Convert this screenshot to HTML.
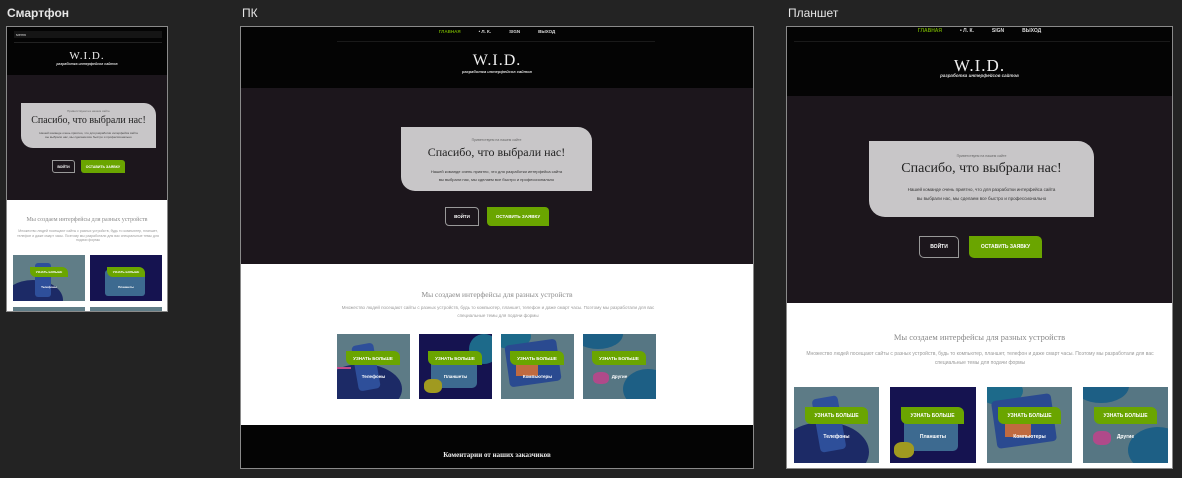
<!DOCTYPE html>
<html><head><meta charset="utf-8"><style>
*{margin:0;padding:0;box-sizing:border-box}
body{width:1182px;height:478px;background:#232323;position:relative;overflow:hidden;font-family:"Liberation Sans",sans-serif}
.a{position:absolute}
.lbl{color:#e6e6e6;font-size:12px}
.frame{position:absolute;border:1px solid #8a8a8a;overflow:hidden;background:#fff}
.hdr{position:absolute;left:0;right:0;top:0;background:#040404}
.hero{position:absolute;left:0;right:0;background:#1c161c}
.nav{position:absolute;left:0;right:0;text-align:center;color:#ddd;font-weight:bold;white-space:nowrap}
.nav span{margin:0 9px}
.nav .g{color:#6aa000}
.logo{position:absolute;left:0;right:0;text-align:center;color:#eee;font-family:"Liberation Serif",serif}
.sub{position:absolute;left:0;right:0;text-align:center;color:#ddd;font-style:italic;font-weight:bold}
.card{position:absolute;background:#c8c6c8;text-align:center;color:#222}
.card .s{color:#666}
.card h1{font-family:"Liberation Serif",serif;font-weight:normal;color:#222}
.btn1{position:absolute;border:1px solid #999;color:#fff;font-weight:bold;display:flex;align-items:center;justify-content:center}
.btn2{position:absolute;background:#6aa500;color:#fff;font-weight:bold;display:flex;align-items:center;justify-content:center}
.t{position:absolute;left:0;right:0;text-align:center;color:#8a8a8a;font-family:"Liberation Serif",serif}
.d{position:absolute;text-align:center;color:#9a9a9a}
.im{position:absolute;overflow:hidden}
.im div{position:absolute}
.gb{background:#6aa500;color:#fff;font-weight:bold;display:flex;align-items:center;justify-content:center;border-radius:0 6px 0 6px}
.cap{color:#fff;font-weight:bold;text-align:center}
</style></head><body>

<!-- Smartphone -->
<div class="a lbl" style="left:7px;top:6px;font-weight:bold;font-size:12px">Смартфон</div>
<div class="frame" style="left:6px;top:26px;width:162px;height:286px">
  <div class="hdr" style="height:48px"></div>
  <div class="a" style="left:7px;top:4px;width:148px;height:7px;background:#151515;color:#ccc;font-size:4px;padding-left:2px;line-height:7px">меню</div>
  <div class="a" style="left:7px;top:15px;width:148px;height:1px;background:#222"></div>
  <div class="logo" style="top:23px;font-size:11px;letter-spacing:1px">W.I.D.</div>
  <div class="sub" style="top:35px;font-size:3.5px">разработка интерфейсов сайтов</div>
  <div class="hero" style="top:48px;height:125px"></div>
  <div class="card" style="left:14px;top:76px;width:135px;height:45px;border-radius:0 12px 0 12px">
    <div class="s" style="font-size:3px;margin-top:6px">Приветствуем на нашем сайте</div>
    <h1 style="font-size:10px;margin-top:2px">Спасибо, что выбрали нас!</h1>
    <div style="font-size:3px;margin-top:5px;line-height:4px;color:#444">Нашей команде очень приятно, что для разработки интерфейса сайта<br>вы выбрали нас, мы сделаем все быстро и профессионально</div>
  </div>
  <div class="btn1" style="left:45px;top:133px;width:23px;height:13px;font-size:3.5px;border-radius:0 3px 0 3px">ВОЙТИ</div>
  <div class="btn2" style="left:74px;top:133px;width:44px;height:13px;font-size:3.5px;border-radius:0 3px 0 3px">ОСТАВИТЬ ЗАЯВКУ</div>
  <div class="t" style="top:190px;font-size:6px">Мы создаем интерфейсы для разных устройств</div>
  <div class="d" style="left:10px;width:142px;top:202px;font-size:3.5px;line-height:4.5px">Множество людей посещают сайты с разных устройств, будь то компьютер, планшет, телефон и даже смарт часы. Поэтому мы разработали для вас специальные темы для подачи формы</div>
  <div class="im" style="left:6px;top:228px;width:72px;height:46px;background:#607d87">
    <div style="left:-10px;top:25px;width:60px;height:40px;background:#1c2a66;border-radius:50%"></div>
    <div style="left:22px;top:8px;width:16px;height:34px;background:#2e4f9a;border-radius:3px"></div>
    <div class="gb" style="left:17px;top:12px;width:38px;height:10px;font-size:3px">УЗНАТЬ БОЛЬШЕ</div>
    <div class="cap" style="left:0;right:0;top:30px;font-size:3px">Телефоны</div>
  </div>
  <div class="im" style="left:83px;top:228px;width:72px;height:46px;background:#151350">
    <div style="left:15px;top:15px;width:40px;height:26px;background:#3d6a90;border-radius:3px"></div>
    <div class="gb" style="left:17px;top:12px;width:38px;height:10px;font-size:3px">УЗНАТЬ БОЛЬШЕ</div>
    <div class="cap" style="left:0;right:0;top:30px;font-size:3px">Планшеты</div>
  </div>
  <div class="im" style="left:6px;top:280px;width:72px;height:10px;background:#607d87"></div>
  <div class="im" style="left:83px;top:280px;width:72px;height:10px;background:#607d87"></div>
</div>

<!-- PC -->
<div class="a lbl" style="left:242px;top:6px">ПК</div>
<div class="frame" style="left:240px;top:26px;width:514px;height:443px">
  <div class="hdr" style="height:61px"></div>
  <div class="nav" style="top:2px;font-size:4.5px;line-height:6px"><span class="g">ГЛАВНАЯ</span><span>• Л. К.</span><span>SIGN</span><span>ВЫХОД</span></div>
  <div class="a" style="left:96px;top:14px;width:318px;height:1px;background:#1a1a1a"></div>
  <div class="logo" style="top:25px;font-size:16px;letter-spacing:1px">W.I.D.</div>
  <div class="sub" style="top:42px;font-size:4px">разработка интерфейсов сайтов</div>
  <div class="hero" style="top:61px;height:176px"></div>
  <div class="card" style="left:160px;top:100px;width:191px;height:64px;border-radius:0 14px 0 14px">
    <div class="s" style="font-size:3.5px;margin-top:11px">Приветствуем на нашем сайте</div>
    <h1 style="font-size:12px;margin-top:3px">Спасибо, что выбрали нас!</h1>
    <div style="font-size:4px;margin-top:8px;line-height:8px;color:#333">Нашей команде очень приятно, что для разработки интерфейса сайта<br>вы выбрали нас, мы сделаем все быстро и профессионально</div>
  </div>
  <div class="btn1" style="left:204px;top:180px;width:34px;height:19px;font-size:4.5px;border-radius:0 4px 0 4px">ВОЙТИ</div>
  <div class="btn2" style="left:246px;top:180px;width:62px;height:19px;font-size:4.5px;border-radius:0 4px 0 4px">ОСТАВИТЬ ЗАЯВКУ</div>
  <div class="t" style="top:263px;font-size:7.5px">Мы создаем интерфейсы для разных устройств</div>
  <div class="d" style="left:96px;width:322px;top:277px;font-size:4.5px;line-height:8px">Множество людей посещают сайты с разных устройств, будь то компьютер, планшет, телефон и даже смарт часы. Поэтому мы разработали для вас специальные темы для подачи формы</div>

  <div class="im" style="left:96px;top:307px;width:73px;height:65px;background:#5d7b86">
    <div style="left:-15px;top:30px;width:80px;height:50px;background:#1c2a66;border-radius:50%"></div>
    <div style="left:18px;top:10px;width:22px;height:46px;background:#2e4f9a;border-radius:4px;transform:rotate(-10deg)"></div>
    <div style="left:0;top:33px;width:14px;height:2px;background:#c04a8a"></div>
    <div class="gb" style="left:9px;top:17px;width:54px;height:14px;font-size:4.5px">УЗНАТЬ БОЛЬШЕ</div>
    <div class="cap" style="left:0;right:0;top:40px;font-size:4.5px">Телефоны</div>
  </div>
  <div class="im" style="left:178px;top:307px;width:73px;height:65px;background:#151350">
    <div style="left:12px;top:20px;width:46px;height:34px;background:#3d6a90;border-radius:5px"></div>
    <div style="left:50px;top:0;width:30px;height:30px;background:#1d6a8a;border-radius:50%"></div>
    <div style="left:5px;top:45px;width:18px;height:14px;background:#a09a20;border-radius:40%"></div>
    <div class="gb" style="left:9px;top:17px;width:54px;height:14px;font-size:4.5px">УЗНАТЬ БОЛЬШЕ</div>
    <div class="cap" style="left:0;right:0;top:40px;font-size:4.5px">Планшеты</div>
  </div>
  <div class="im" style="left:260px;top:307px;width:73px;height:65px;background:#5d7b86">
    <div style="left:-10px;top:-10px;width:40px;height:25px;background:#1d6a8a;border-radius:50%"></div>
    <div style="left:6px;top:8px;width:52px;height:42px;background:#2a4a90;border-radius:4px;transform:rotate(-8deg)"></div>
    <div style="left:15px;top:30px;width:22px;height:12px;background:#c06a40"></div>
    <div class="gb" style="left:9px;top:17px;width:54px;height:14px;font-size:4.5px">УЗНАТЬ БОЛЬШЕ</div>
    <div class="cap" style="left:0;right:0;top:40px;font-size:4.5px">Компьютеры</div>
  </div>
  <div class="im" style="left:342px;top:307px;width:73px;height:65px;background:#567683">
    <div style="left:40px;top:35px;width:50px;height:40px;background:#1d5f85;border-radius:50%"></div>
    <div style="left:-10px;top:-15px;width:50px;height:30px;background:#1d5f85;border-radius:50%"></div>
    <div style="left:10px;top:38px;width:16px;height:12px;background:#b04a8a;border-radius:40%"></div>
    <div class="gb" style="left:9px;top:17px;width:54px;height:14px;font-size:4.5px">УЗНАТЬ БОЛЬШЕ</div>
    <div class="cap" style="left:0;right:0;top:40px;font-size:4.5px">Другие</div>
  </div>
  <div class="a" style="left:0;right:0;top:398px;height:46px;background:#040404"></div>
  <div class="a" style="left:0;right:0;top:424px;text-align:center;color:#eee;font-family:'Liberation Serif',serif;font-weight:bold;font-size:7px">Коментарии от наших заказчиков</div>
</div>

<!-- Tablet -->
<div class="a lbl" style="left:788px;top:6px">Планшет</div>
<div class="frame" style="left:786px;top:26px;width:387px;height:443px">
  <div class="hdr" style="height:69px"></div>
  <div class="nav" style="top:1px;font-size:5px;line-height:7px"><span class="g">ГЛАВНАЯ</span><span>• Л. К.</span><span>SIGN</span><span>ВЫХОД</span></div>
  <div class="a" style="left:7px;top:14px;width:376px;height:1px;background:#1a1a1a"></div>
  <div class="logo" style="top:29px;font-size:17px;letter-spacing:1px">W.I.D.</div>
  <div class="sub" style="top:46px;font-size:4.5px">разработка интерфейсов сайтов</div>
  <div class="hero" style="top:69px;height:207px"></div>
  <div class="card" style="left:82px;top:114px;width:225px;height:76px;border-radius:0 16px 0 16px">
    <div class="s" style="font-size:3.5px;margin-top:13px">Приветствуем на нашем сайте</div>
    <h1 style="font-size:14px;margin-top:3px">Спасибо, что выбрали нас!</h1>
    <div style="font-size:4.5px;margin-top:9px;line-height:8.5px;color:#333">Нашей команде очень приятно, что для разработки интерфейса сайта<br>вы выбрали нас, мы сделаем все быстро и профессионально</div>
  </div>
  <div class="btn1" style="left:132px;top:209px;width:40px;height:22px;font-size:5px;border-radius:0 5px 0 5px">ВОЙТИ</div>
  <div class="btn2" style="left:182px;top:209px;width:73px;height:22px;font-size:5px;border-radius:0 5px 0 5px">ОСТАВИТЬ ЗАЯВКУ</div>
  <div class="t" style="top:305px;font-size:8.5px">Мы создаем интерфейсы для разных устройств</div>
  <div class="d" style="left:8px;width:370px;top:323px;font-size:5px;line-height:8.5px">Множество людей посещают сайты с разных устройств, будь то компьютер, планшет, телефон и даже смарт часы. Поэтому мы разработали для вас специальные темы для подачи формы</div>

  <div class="im" style="left:7px;top:360px;width:85px;height:76px;background:#5d7b86">
    <div style="left:-15px;top:35px;width:90px;height:60px;background:#1c2a66;border-radius:50%"></div>
    <div style="left:22px;top:10px;width:26px;height:54px;background:#2e4f9a;border-radius:4px;transform:rotate(-10deg)"></div>
    <div class="gb" style="left:11px;top:20px;width:63px;height:17px;font-size:5px">УЗНАТЬ БОЛЬШЕ</div>
    <div class="cap" style="left:0;right:0;top:47px;font-size:5px">Телефоны</div>
  </div>
  <div class="im" style="left:103px;top:360px;width:86px;height:76px;background:#151350">
    <div style="left:14px;top:24px;width:54px;height:40px;background:#3d6a90;border-radius:5px"></div>
    <div style="left:4px;top:55px;width:20px;height:16px;background:#a09a20;border-radius:40%"></div>
    <div class="gb" style="left:11px;top:20px;width:63px;height:17px;font-size:5px">УЗНАТЬ БОЛЬШЕ</div>
    <div class="cap" style="left:0;right:0;top:47px;font-size:5px">Планшеты</div>
  </div>
  <div class="im" style="left:200px;top:360px;width:85px;height:76px;background:#5d7b86">
    <div style="left:-10px;top:-10px;width:46px;height:28px;background:#1d6a8a;border-radius:50%"></div>
    <div style="left:7px;top:10px;width:60px;height:48px;background:#2a4a90;border-radius:4px;transform:rotate(-8deg)"></div>
    <div style="left:18px;top:36px;width:26px;height:14px;background:#c06a40"></div>
    <div class="gb" style="left:11px;top:20px;width:63px;height:17px;font-size:5px">УЗНАТЬ БОЛЬШЕ</div>
    <div class="cap" style="left:0;right:0;top:47px;font-size:5px">Компьютеры</div>
  </div>
  <div class="im" style="left:296px;top:360px;width:85px;height:76px;background:#567683">
    <div style="left:45px;top:40px;width:60px;height:46px;background:#1d5f85;border-radius:50%"></div>
    <div style="left:-10px;top:-18px;width:56px;height:34px;background:#1d5f85;border-radius:50%"></div>
    <div style="left:10px;top:44px;width:18px;height:14px;background:#b04a8a;border-radius:40%"></div>
    <div class="gb" style="left:11px;top:20px;width:63px;height:17px;font-size:5px">УЗНАТЬ БОЛЬШЕ</div>
    <div class="cap" style="left:0;right:0;top:47px;font-size:5px">Другие</div>
  </div>
</div>
</body></html>
